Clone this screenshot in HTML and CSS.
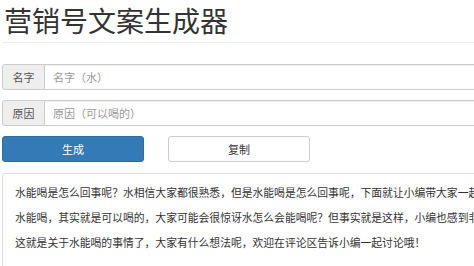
FILE: index.html
```html
<!DOCTYPE html>
<html lang="zh-CN">

<head>
    <meta charset="UTF-8" />
    <meta name="viewport" content="width=device-width, initial-scale=1.0" />
    <title>营销号文案生成器</title>
    <link rel="stylesheet" href="styles.css">
</head>

<body>
    <div class="container">
        <h1 class="title">营销号文案生成器</h1>

        <div class="inputGroup">
            <span class="addon">名字</span>
            <input class="field" type="text" placeholder="名字（水）" />
        </div>
        <div class="inputGroup">
            <span class="addon">原因</span>
            <input class="field" type="text" placeholder="原因（可以喝的）" />
        </div>

        <div class="buttons">
            <button class="btn primary">生成</button>
            <button class="btn plain">复制</button>
        </div>

        <div class="result">
            <p>水能喝是怎么回事呢？水相信大家都很熟悉，但是水能喝是怎么回事呢，下面就让小编带大家一起了解吧。</p>
            <p>水能喝，其实就是可以喝的，大家可能会很惊讶水怎么会能喝呢？但事实就是这样，小编也感到非常惊讶。</p>
            <p>这就是关于水能喝的事情了，大家有什么想法呢，欢迎在评论区告诉小编一起讨论哦！</p>
        </div>
    </div>
</body>

</html>
```

FILE: styles.css
```css
html,
body {
    margin: 0;
    overflow: hidden;
    background-color: #fff;
}

body {
    font-family: "Noto Sans CJK SC", "Noto Sans", sans-serif;
    color: #333;
}

.container {
    width: 640px;
    padding-left: 2px;
}

.title {
    margin: 0;
    padding-left: 2px;
    font-size: 28px;
    font-weight: normal;
    line-height: 40px;
    padding-bottom: 2px;
    border-bottom: 1px solid #eee;
    margin-bottom: 21px;
}

.inputGroup {
    display: flex;
    height: 26px;
    margin-bottom: 10px;
}

.addon {
    display: flex;
    align-items: center;
    justify-content: center;
    width: 41px;
    background-color: #eee;
    border: 1px solid #ccc;
    border-radius: 3px 0 0 3px;
    font-size: 11px;
    color: #555;
}

.field {
    flex: 1;
    margin: 0;
    padding: 0 8px;
    border: 1px solid #ccc;
    border-left: none;
    border-radius: 0 3px 3px 0;
    font-family: inherit;
    font-size: 11px;
    box-shadow: inset 0 1px 1px rgba(0, 0, 0, .075);
}

.field::placeholder {
    color: #999;
}

.buttons {
    display: flex;
    gap: 24px;
    margin-bottom: 11px;
}

.btn {
    width: 142px;
    height: 26px;
    margin: 0;
    padding: 0;
    border: 1px solid #ccc;
    border-radius: 3px;
    font-family: inherit;
    font-size: 11px;
}

.primary {
    width: 142px;
    background-color: #337ab7;
    border-color: #2e6da4;
    color: #fff;
}

.plain {
    background-color: #fff;
    color: #333;
}

.result {
    height: 120px;
    border: 1px solid #ddd;
    border-radius: 3px;
    padding: 6px 12px;
    font-size: 10.8px;
    line-height: 25px;
    white-space: nowrap;
}

.result p {
    margin: 0;
}
```
